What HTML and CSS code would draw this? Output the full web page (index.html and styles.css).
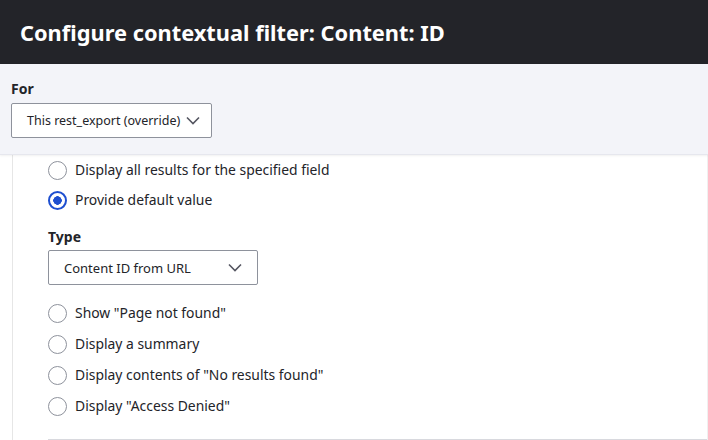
FILE: index.html
```html
<!DOCTYPE html>
<html>
<head>
<meta charset="utf-8">
<link rel="stylesheet" href="styles.css">
</head>
<body>
<div class="dialog">
  <header class="titlebar"><h1 class="title">Configure contextual filter: Content: ID</h1></header>
  <section class="override">
    <label class="label">For</label>
    <div class="select select-for">
      <span class="select-text">This rest_export (override)</span>
      <svg class="chev" width="14" height="9" viewBox="0 0 14 9"><path d="M1 1.5 L7 7.5 L13 1.5" fill="none" stroke="#545560" stroke-width="1.6"/></svg>
    </div>
  </section>
  <main class="content">
    <div class="panel">
      <div class="radios">
        <div class="radio"><span class="dot"></span><span>Display all results for the specified field</span></div>
        <div class="radio"><span class="dot checked"></span><span>Provide default value</span></div>
      </div>
      <div class="type">
        <label class="label">Type</label>
        <div class="select select-type">
          <span class="select-text">Content ID from URL</span>
          <svg class="chev" width="14" height="9" viewBox="0 0 14 9"><path d="M1 1.5 L7 7.5 L13 1.5" fill="none" stroke="#545560" stroke-width="1.6"/></svg>
        </div>
      </div>
      <div class="radios radios-2">
        <div class="radio"><span class="dot"></span><span>Show "Page not found"</span></div>
        <div class="radio"><span class="dot"></span><span>Display a summary</span></div>
        <div class="radio"><span class="dot"></span><span>Display contents of "No results found"</span></div>
        <div class="radio"><span class="dot"></span><span>Display "Access Denied"</span></div>
      </div>
      <div class="rule"></div>
    </div>
  </main>
</div>
</body>
</html>
```
FILE: styles.css
```css
html, body { margin: 0; padding: 0; }
body {
  width: 708px; height: 440px; overflow: hidden;
  font-family: "Noto Sans", "Open Sans", sans-serif;
  color: #232429; background: #fff;
}
.titlebar {
  height: 64px; background: #232429;
  display: flex; align-items: center; padding: 0 20px;
  box-sizing: border-box;
}
.title {
  margin: 0; color: #fff; font-size: 21.8px; font-weight: 700;
  letter-spacing: 0;
}
.override {
  background: #f3f4f9; height: 91px; box-sizing: border-box;
  padding: 16px 11px 0;
  border-bottom: 1px solid #e6e7ee;
  box-shadow: 0 1px 2px rgba(0,0,0,0.06);
  position: relative; z-index: 1;
}
.label { display: block; font-weight: 700; font-size: 14px; line-height: 18px; }
.select {
  display: flex; align-items: center;
  border: 1px solid #8e929c; border-radius: 2px; background: #fff;
  box-sizing: border-box; height: 35px; font-size: 13px;
  white-space: nowrap;
}
.select-for { width: 201px; margin-top: 5px; padding: 0 14px 0 15px; gap: 6px; font-size: 12.5px; }
.select-type { width: 210px; margin-top: 4px; padding: 0 15px 0 15px; justify-content: space-between; }
.chev { flex: none; }
.content { padding-left: 12px; height: 285px; }
.panel {
  border-left: 1px solid #e6e6e6;
  border-right: 1px solid #f0f0f0;
  height: 100%; padding: 5px 0 0 35px; box-sizing: border-box;
}
.radios { display: flex; flex-direction: column; gap: 10px; }
.radios-2 { gap: 11px; margin-top: 18px; }
.radio { display: flex; align-items: center; gap: 8px; font-size: 13.9px; line-height: 20px; }
.dot {
  width: 17px; height: 17px; border: 1px solid #8e929c; border-radius: 50%;
  box-sizing: content-box; flex: none; background: #fff;
}
.dot.checked {
  border: 2px solid #1e4fd0; width: 15px; height: 15px;
  background: radial-gradient(circle, #1e4fd0 0 4px, #fff 4.5px);
}
.type { margin-top: 18px; }
.rule { margin-top: 23px; border-top: 1px solid #d8d9de; }
```
